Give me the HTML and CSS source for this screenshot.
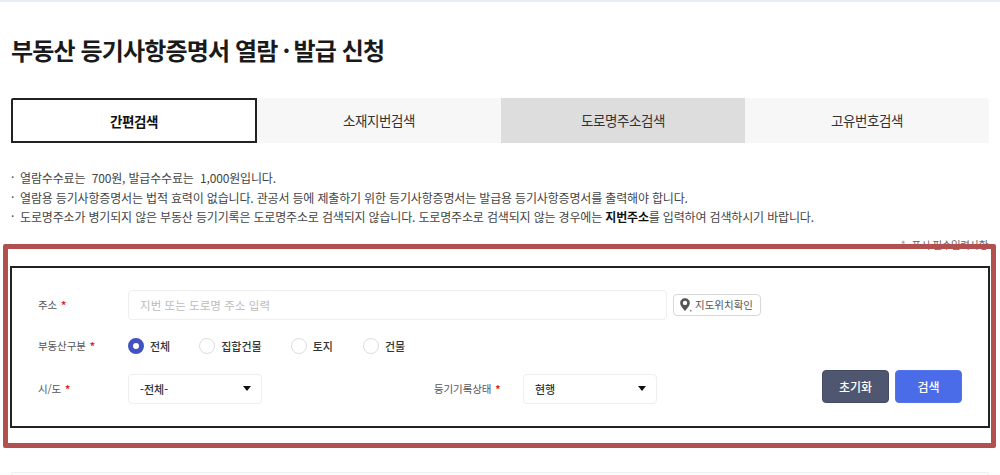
FILE: index.html
```html
<!DOCTYPE html>
<html lang="ko">
<head>
<meta charset="utf-8">
<title>부동산 등기사항증명서 열람·발급 신청</title>
<link rel="stylesheet" href="styles.css">
</head>
<body>
<div class="topbar"></div>
<main class="page">
  <h1 class="title">부동산 등기사항증명서 열람<span class="dot">·</span>발급 신청</h1>
  <nav class="tabs">
    <a class="tab tab-active">간편검색</a>
    <a class="tab">소재지번검색</a>
    <a class="tab tab-hover">도로명주소검색</a>
    <a class="tab tab-last">고유번호검색</a>
  </nav>
  <ul class="notes">
    <li>열람수수료는&nbsp; 700원, 발급수수료는&nbsp; 1,000원입니다.</li>
    <li>열람용 등기사항증명서는 법적 효력이 없습니다. 관공서 등에 제출하기 위한 등기사항증명서는 발급용 등기사항증명서를 출력해야 합니다.</li>
    <li>도로명주소가 병기되지 않은 부동산 등기기록은 도로명주소로 검색되지 않습니다. 도로명주소로 검색되지 않는 경우에는 <strong>지번주소</strong>를 입력하여 검색하시기 바랍니다.</li>
  </ul>
  <p class="required-note"><span class="req-mark">*</span>표시 필수입력사항</p>
  <form class="search">
    <div class="row row-addr">
      <label class="lbl">주소 <em>*</em></label>
      <div class="input input-addr">지번 또는 도로명 주소 입력</div>
      <button type="button" class="map-btn">
        <svg class="pin" width="12" height="14" viewBox="0 0 12 14"><path d="M5 0.3C2.300 0.300 0.200 2.400 0.200 5c0 3 3 5.900 4.800 8C6.800 10.900 9.800 8 9.800 5 9.800 2.400 7.700 0.300 5 0.300z" fill="#555"/><circle cx="5" cy="4.900" r="2.200" fill="#fff"/><rect x="10" y="12" width="1.500" height="1.500" fill="#888"/></svg>
        지도위치확인
      </button>
    </div>
    <div class="row row-type">
      <label class="lbl">부동산구분 <em>*</em></label>
      <div class="radios">
        <span class="radio radio-on"><i></i>전체</span>
        <span class="radio radio-2"><i></i>집합건물</span>
        <span class="radio radio-3"><i></i>토지</span>
        <span class="radio"><i></i>건물</span>
      </div>
    </div>
    <div class="row row-sel">
      <label class="lbl">시/도 <em>*</em></label>
      <div class="input select">-전체-<b></b></div>
      <label class="lbl lbl-status">등기기록상태 <em>*</em></label>
      <div class="input select">현행<b></b></div>
      <div class="actions">
        <button type="button" class="btn btn-reset">초기화</button>
        <button type="button" class="btn btn-search">검색</button>
      </div>
    </div>
  </form>
  <div class="result"></div>
</main>
<div class="highlight"></div>
</body>
</html>
```
FILE: styles.css
```css
* { box-sizing: border-box; }
html, body { margin: 0; height: 475px; overflow: hidden; background: #fff; }
body { font-family: "Noto Sans CJK KR", "Noto Sans", sans-serif; color: #333; position: relative; }
.topbar { height: 2px; background: #e8ecf6; }
.page { padding: 0 10px 0 11px; }
.title { margin: 32px 0 0; height: 32px; font-size: 24px; line-height: 32px; font-weight: 700; color: #1a1a1a; letter-spacing: -0.85px; white-space: nowrap; }
.dot { margin: 0 4px 0 5px; }
.tabs { display: grid; grid-template-columns: 246px 244px 244px 244px; height: 45px; margin-top: 32px; }
.tab { display: flex; align-items: center; justify-content: center; background: #f7f7f7; font-size: 13.500px; color: #333; letter-spacing: -0.4px; padding-bottom: 2px; }
.tab-active { background: #fff; border: 2px solid #222; font-weight: 700; color: #111; border-radius: 2px 0 0 0; padding-bottom: 0; }
.tab-hover { background: #ddd; }
.tab-last { border-radius: 0 3px 0 0; }
.notes { list-style: none; margin: 25px 0 0; padding: 0; font-size: 12px; line-height: 19.500px; color: #444; letter-spacing: -0.165px; }
.notes li { padding-left: 9px; position: relative; white-space: nowrap; }
.notes li::before { content: "·"; position: absolute; left: 0; top: -1px; }
.notes strong { color: #111; }
.required-note { margin: 10px 2px 0 0; height: 16px; text-align: right; font-size: 10.500px; line-height: 16px; color: #666; letter-spacing: -0.4px; }
.req-mark { margin-right: 6px; color: #999; }
.search { width: 980px; height: 162px; margin: 13px 0 0 -1px; border: 2px solid #222; background: #fff; padding: 22px 26px 0; }
.row { display: flex; align-items: center; }
.row-addr { height: 30px; }
.row-type { height: 30px; margin-top: 11px; }
.row-sel { height: 30px; margin-top: 13px; position: relative; }
.lbl { width: 90px; font-size: 10.500px; color: #555; letter-spacing: -0.1px; flex: none; }
.lbl em { color: #d22; font-style: normal; font-weight: 700; margin-left: 1px; }
.input { height: 30px; background: #fff; border: 1px solid #eee; border-radius: 4px; font-size: 11.500px; display: flex; align-items: center; padding: 0 11px; }
.input-addr { width: 539px; color: #bbb; letter-spacing: 0.05px; }
.map-btn { margin-left: 6px; width: 88px; height: 22px; background: #fff; border: 1px solid #d8d8d8; border-radius: 4px; font: inherit; font-size: 10.500px; color: #555; display: flex; align-items: center; justify-content: flex-start; gap: 3px; padding: 0 0 0 6px; }
.pin { flex: none; }
.radios { display: flex; align-items: center; font-size: 11px; color: #333; }
.radio { display: flex; align-items: center; gap: 6px; font-weight: 500; margin-right: 30px; }
.radio i { width: 16px; height: 16px; border-radius: 50%; border: 1px solid #ddd; background: #fff; }
.radio-on { margin-right: 29px; }
.radio-on i { border: 5px solid #4252c0; }
.radio-2 { margin-right: 29px; }
.radio-3 { margin-right: 30px; }
.select { width: 134px; justify-content: space-between; color: #333; padding-right: 10px; font-weight: 500; font-size: 11px; }
.select b { width: 0; height: 0; border-left: 4px solid transparent; border-right: 4px solid transparent; border-top: 5px solid #111; }
.lbl-status { margin-left: 172px; width: 89px; }
.actions { display: flex; gap: 6px; margin-left: auto; margin-top: -5px; }
.btn { width: 67px; height: 33px; border-radius: 4px; font: inherit; font-size: 12px; font-weight: 500; color: #fff; padding: 0; }
.btn-reset { background: #4f566f; border: 1px solid #444b63; }
.btn-search { background: #4b6ce8; border: 1px solid #5474ee; }
.result { height: 3px; margin-top: 44px; width: 978px; border: 1px solid #eee; border-bottom: 0; border-radius: 4px 4px 0 0; }
.highlight { position: absolute; left: 3px; top: 244px; width: 993px; height: 204px; border: 5px solid #b24f4f; border-radius: 2px; pointer-events: none; }
```
